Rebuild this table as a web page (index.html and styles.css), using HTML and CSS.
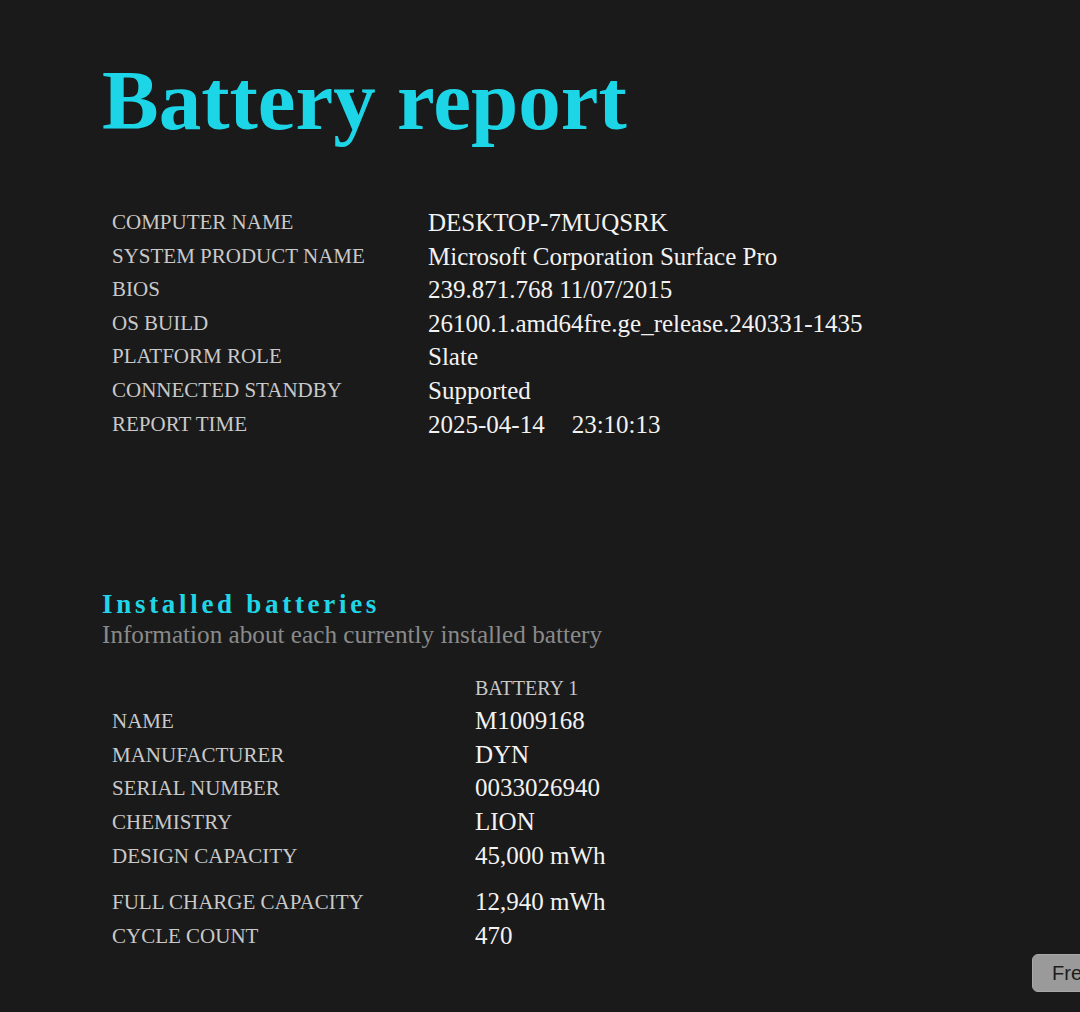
FILE: index.html
```html
<!DOCTYPE html>
<html lang="en">
<head>
<meta charset="utf-8">
<title>Battery report</title>
<link rel="stylesheet" href="styles.css">
</head>
<body>
<main class="page">
  <h1 class="title">Battery report</h1>
  <table class="info">
    <tbody>
      <tr><td class="label">Computer name</td><td class="value">DESKTOP-7MUQSRK</td></tr>
      <tr><td class="label">System product name</td><td class="value">Microsoft Corporation Surface Pro</td></tr>
      <tr><td class="label">BIOS</td><td class="value">239.871.768 11/07/2015</td></tr>
      <tr><td class="label">OS build</td><td class="value">26100.1.amd64fre.ge_release.240331-1435</td></tr>
      <tr><td class="label">Platform role</td><td class="value">Slate</td></tr>
      <tr><td class="label">Connected standby</td><td class="value">Supported</td></tr>
      <tr><td class="label">Report time</td><td class="value">2025-04-14<span class="time">23:10:13</span></td></tr>
    </tbody>
  </table>

  <h2 class="section-title">Installed batteries</h2>
  <div class="section-desc">Information about each currently installed battery</div>

  <table class="batteries">
    <thead>
      <tr><td class="label"></td><td class="col-head">Battery 1</td></tr>
    </thead>
    <tbody>
      <tr><td class="label">Name</td><td class="value">M1009168</td></tr>
      <tr><td class="label">Manufacturer</td><td class="value">DYN</td></tr>
      <tr><td class="label">Serial number</td><td class="value">0033026940</td></tr>
      <tr><td class="label">Chemistry</td><td class="value">LION</td></tr>
      <tr><td class="label">Design capacity</td><td class="value">45,000 mWh</td></tr>
      <tr class="spacer"><td></td><td></td></tr>
      <tr><td class="label">Full charge capacity</td><td class="value">12,940 mWh</td></tr>
      <tr><td class="label">Cycle count</td><td class="value">470</td></tr>
    </tbody>
  </table>
</main>
<button class="float-btn" type="button">Free</button>
</body>
</html>
```

FILE: styles.css
```css
html {
  overflow: hidden;
}

body {
  margin: 0;
  background: #1a1a1a;
  font-family: "Liberation Serif", "Times New Roman", serif;
  color: #f0f0f0;
}

.page {
  padding: 58px 0 0 102px;
}

.title {
  margin: 0;
  font-size: 85px;
  line-height: 84px;
  font-weight: bold;
  color: #1cd5e6;
}

.info,
.batteries {
  border-collapse: collapse;
  border-spacing: 0;
}

.info {
  margin-top: 64px;
}

.info td,
.batteries td {
  padding: 0;
}

.info .value,
.batteries .value,
.batteries .col-head {
  vertical-align: baseline;
}

.info .label {
  vertical-align: top;
  padding: 2px 0 0 10px;
}

.batteries .label {
  vertical-align: top;
  padding: 3px 0 0 10px;
}

.label {
  font-size: 21px;
  line-height: 28px;
  text-transform: uppercase;
  color: #c9c9c9;
  white-space: nowrap;
}

.info .label {
  width: 316px;
}

.batteries .label {
  width: 363px;
}

.value {
  font-size: 25px;
  line-height: 33.6px;
  color: #f2f2f2;
  white-space: nowrap;
}

.time {
  margin-left: 27px;
}

.section-title {
  margin: 148px 0 0;
  font-size: 27px;
  line-height: 31px;
  font-weight: bold;
  letter-spacing: 3.7px;
  color: #20d6e6;
}

.section-desc {
  margin-top: 0;
  font-size: 25.2px;
  line-height: 30px;
  color: #8a8a8a;
}

.batteries {
  margin-top: 22px;
}

.col-head {
  font-size: 20px;
  line-height: 32px;
  text-transform: uppercase;
  color: #c9c9c9;
}

.spacer td {
  height: 13px;
}

.float-btn {
  position: fixed;
  left: 1032px;
  top: 954px;
  width: 120px;
  height: 38px;
  padding: 0 0 0 19px;
  text-align: left;
  border: 1px solid #a8a8a8;
  border-radius: 6px;
  background: #9a9a9a;
  color: #1c1c1c;
  font-family: "Liberation Sans", Arial, sans-serif;
  font-size: 20px;
}
```
